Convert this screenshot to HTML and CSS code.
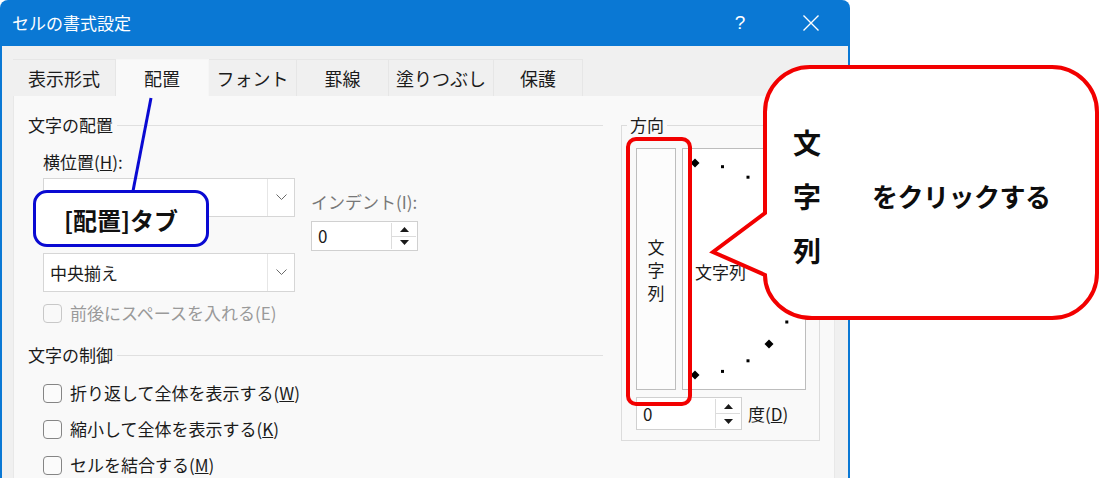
FILE: index.html
```html
<!DOCTYPE html>
<html lang="ja">
<head>
<meta charset="utf-8">
<title>セルの書式設定</title>
<link rel="stylesheet" href="styles.css">
</head>
<body>
<div class="stage">
  <div class="dialog">
    <div class="titlebar">
      <span class="title">セルの書式設定</span>
      <span class="tb-btn help">?</span>
      <span class="tb-btn close">
        <svg width="18" height="18" viewBox="0 0 18 18"><path d="M1.5 1.5 L16.5 16.5 M16.5 1.5 L1.5 16.5" stroke="#fff" stroke-width="1.4" fill="none"/></svg>
      </span>
    </div>
    <div class="dbody">
      <div class="tabs">
        <div class="tab t1">表示形式</div>
        <div class="tab t2 active">配置</div>
        <div class="tab t3">フォント</div>
        <div class="tab t4">罫線</div>
        <div class="tab t5">塗りつぶし</div>
        <div class="tab t6">保護</div>
      </div>
      <div class="panel">
        <div class="leftcol">
          <div class="sec-head">文字の配置</div>
          <div class="indent">
            <div class="align-grid">
              <div class="col1">
                <div class="lbl">横位置(<u>H</u>):</div>
                <div class="select">
                  <span class="val"></span>
                  <span class="arrow"><svg width="11" height="7" viewBox="0 0 11 7"><polyline points="0.5,0.5 5.5,5.5 10.5,0.5" fill="none" stroke="#6a6a6a" stroke-width="1"/></svg></span>
                </div>
                <div class="lbl lbl2"></div>
                <div class="select sel2">
                  <span class="val">中央揃え</span>
                  <span class="arrow"><svg width="11" height="7" viewBox="0 0 11 7"><polyline points="0.5,0.5 5.5,5.5 10.5,0.5" fill="none" stroke="#6a6a6a" stroke-width="1"/></svg></span>
                </div>
              </div>
              <div class="col2">
                <div class="lbl dim">インデント(I):</div>
                <div class="spin">
                  <span class="val">0</span>
                  <span class="btns">
                    <span class="sb"><svg width="9" height="5" viewBox="0 0 9 5"><polygon points="0,5 4.5,0 9,5" fill="#1a1a1a"/></svg></span>
                    <span class="sb sb-down"><svg width="9" height="5" viewBox="0 0 9 5"><polygon points="0,0 4.5,5 9,0" fill="#1a1a1a"/></svg></span>
                  </span>
                </div>
              </div>
            </div>
            <div class="cb disabled first"><span class="box"></span><span>前後にスペースを入れる(E)</span></div>
          </div>
          <div class="sec-head head2">文字の制御</div>
          <div class="indent">
            <div class="cb c1"><span class="box"></span><span>折り返して全体を表示する(<u>W</u>)</span></div>
            <div class="cb c2"><span class="box"></span><span>縮小して全体を表示する(<u>K</u>)</span></div>
            <div class="cb c2"><span class="box"></span><span>セルを結合する(<u>M</u>)</span></div>
          </div>
        </div>
        <fieldset class="dir">
          <legend>方向</legend>
          <div class="dir-row">
            <div class="vbtn">文<br>字<br>列</div>
            <div class="angle">
              <svg width="122" height="240" viewBox="0 0 122 240">
                <polygon points="12,9.5 16.5,14 12,18.5 7.5,14" fill="#000"/>
                <rect x="38" y="16.2" width="3" height="3" fill="#000"/>
                <rect x="63.5" y="26.7" width="3" height="3" fill="#000"/>
                <polygon points="87,40.5 91.5,45 87,49.5 82.5,45" fill="#000"/>
                <rect x="102.3" y="65.5" width="3" height="3" fill="#000"/>
                <rect x="112.9" y="91.1" width="3" height="3" fill="#000"/>
                <polygon points="118,115.5 122.5,120 118,124.5 113.5,120" fill="#000"/>
                <rect x="112.9" y="145.9" width="3" height="3" fill="#000"/>
                <rect x="102.3" y="171.5" width="3" height="3" fill="#000"/>
                <polygon points="86,190.5 90.5,195 86,199.5 81.5,195" fill="#000"/>
                <rect x="63.5" y="210.3" width="3" height="3" fill="#000"/>
                <rect x="38" y="220.9" width="3" height="3" fill="#000"/>
                <polygon points="12,221.5 16.5,226 12,230.5 7.5,226" fill="#000"/>
                <text x="12" y="130" class="angle-text">文字列</text>
              </svg>
            </div>
          </div>
          <div class="deg-row">
            <div class="spin deg">
              <span class="val">0</span>
              <span class="btns">
                <span class="sb"><svg width="9" height="5" viewBox="0 0 9 5"><polygon points="0,5 4.5,0 9,5" fill="#1a1a1a"/></svg></span>
                <span class="sb sb-down"><svg width="9" height="5" viewBox="0 0 9 5"><polygon points="0,0 4.5,5 9,0" fill="#1a1a1a"/></svg></span>
              </span>
            </div>
            <span class="lbl">度(<u>D</u>)</span>
          </div>
        </fieldset>
      </div>
    </div>
  </div>

  <svg class="blueline" width="220" height="200" viewBox="0 0 220 200"><line x1="151" y1="98" x2="133" y2="191" stroke="#0a0ad2" stroke-width="3"/></svg>
  <div class="bluebox">[配置]タブ</div>

  <div class="redbox"></div>

  <svg class="bubble" width="401" height="265" viewBox="0 0 401 265">
    <path d="M110 7 H352 A45 45 0 0 1 397 52 V213 A45 45 0 0 1 352 258 H112 A47 43 0 0 1 65 215 L13 192 L65 153 V52 A45 45 0 0 1 110 7 Z" fill="#fff" stroke="#f20000" stroke-width="4" stroke-linejoin="miter"/>
  </svg>
  <div class="bubble-text">
    <div class="bt-col">
      <span>文</span>
      <span>字</span>
      <span>列</span>
    </div>
    <div class="bt-rest">をクリックする</div>
  </div>
</div>
</body>
</html>
```

FILE: styles.css
```css
* { box-sizing: border-box; }
html, body { margin: 0; padding: 0; }
body {
  background: #ffffff;
  font-family: "Noto Sans CJK JP", "Noto Sans", sans-serif;
  color: #1b1b1b;
}
.stage {
  position: relative;
  width: 1101px;
  height: 478px;
  overflow: hidden;
}
.dialog {
  width: 850px;
  height: 540px;
  background: #0a78d4;
  border-radius: 8px 8px 0 0;
  overflow: hidden;
  padding: 0 2px;
  display: flex;
  flex-direction: column;
}
.titlebar {
  height: 46px;
  display: flex;
  align-items: center;
  color: #fff;
  padding-left: 10px;
}
.title { flex: 1; font-size: 17px; line-height: 24px; }
.tb-btn {
  width: 56px;
  height: 46px;
  display: flex;
  align-items: center;
  justify-content: center;
}
.help { font-size: 19px; margin-right: 15px; font-family: "Liberation Sans", sans-serif; }
.close { margin-right: 9px; }

.dbody {
  flex: 1;
  background: #f0f0f0;
  padding: 13px 13px 0 11px;
}
.tabs { display: flex; height: 37px; }
.tab {
  height: 37px;
  font-size: 18px;
  line-height: 36px;
  text-align: center;
  border-top: 1px solid #e6e6e6;
  border-right: 1px solid #e6e6e6;
  background: #f0f0f0;
}
.tab.active { background: #f9f9f9; border-color: #f6f6f6; }
.t1 { width: 103px; }
.t2 { width: 93px; }
.t3 { width: 88px; }
.t4 { width: 92px; }
.t5 { width: 105px; }
.t6 { width: 89px; }

.panel {
  height: 420px;
  background: #f9f9f9;
  border: 1px solid #e8e8e8;
  border-top: 0;
  display: grid;
  grid-template-columns: 575px 199px;
  column-gap: 18px;
  align-items: start;
  padding: 17px 0 0 14px;
}
.sec-head {
  display: flex;
  align-items: center;
  height: 24px;
  font-size: 17px;
  line-height: 24px;
}
.sec-head::after {
  content: "";
  flex: 1;
  border-top: 1px solid #e0e0e0;
  margin-left: 4px;
}
.head2 { margin-top: 18px; }
.indent { margin-left: 15px; }
.align-grid {
  margin-top: 13px;
  display: grid;
  grid-template-columns: 252px 107px;
  column-gap: 16px;
  align-items: start;
}
.col1 { display: flex; flex-direction: column; }
.lbl { height: 24px; line-height: 24px; font-size: 17px; white-space: nowrap; }
.lbl2 { margin-top: 6px; }
.dim { color: #777777; }
.select {
  margin-top: 4px;
  height: 39px;
  border: 1px solid #d6d6d6;
  background: #fff;
  display: flex;
}
.sel2 { margin-top: 6px; }
.select .val { flex: 1; padding-left: 6px; line-height: 37px; font-size: 17px; }
.select .arrow {
  width: 27px;
  border-left: 1px solid #e6e6e6;
  display: flex;
  align-items: center;
  justify-content: center;
}
.col2 { padding-top: 40px; }
.spin {
  margin-top: 7px;
  height: 30px;
  border: 1px solid #d0d0d0;
  background: #fff;
  display: flex;
}
.spin .val { flex: 1; padding-left: 6px; line-height: 28px; font-size: 17px; }
.spin .btns {
  width: 25px;
  margin: 1px 1px 1px 0;
  border-left: 1px solid #dcdcdc;
  display: flex;
  flex-direction: column;
}
.sb { flex: 1; display: flex; align-items: center; justify-content: center; }
.sb-down { border-top: 1px solid #dcdcdc; }

.cb {
  display: flex;
  align-items: center;
  gap: 8px;
  height: 24px;
  font-size: 17px;
  line-height: 24px;
  white-space: nowrap;
}
.cb .box {
  width: 19px;
  height: 19px;
  border: 1px solid #858585;
  border-radius: 4px;
  background: #fbfbfb;
}
.cb.first { margin-top: 9px; }
.cb.disabled { color: #9a9a9a; }
.cb.disabled .box { border-color: #c8c8c8; background: #f9f9f9; }
.c1 { margin-top: 14px; }
.c2 { margin-top: 12px; }

.dir {
  margin: 0;
  min-width: 0;
  border: 1px solid #dcdcdc;
  padding: 11px 13px 10px 14px;
}
.dir legend {
  font-size: 17px;
  line-height: 24px;
  padding: 0 3px;
  margin-left: -9px;
}
.dir-row { display: flex; gap: 6px; height: 242px; }
.vbtn {
  width: 40px;
  border: 1px solid #bdbdbd;
  background: #fcfcfc;
  display: flex;
  align-items: center;
  justify-content: center;
  text-align: center;
  font-size: 17px;
  line-height: 23px;
}
.angle { width: 124px; border: 1px solid #bdbdbd; background: #fff; }
.angle svg { display: block; }
.angle-text { font-family: "Noto Sans CJK JP", sans-serif; font-size: 17px; fill: #1b1b1b; }
.deg-row { margin-top: 7px; display: flex; align-items: center; gap: 6px; }
.spin.deg { margin-top: 0; width: 106px; height: 33px; }
.spin.deg .val { line-height: 31px; }

.blueline { position: absolute; left: 0; top: 0; }
.bluebox {
  position: absolute;
  left: 33px;
  top: 190px;
  width: 176px;
  height: 57px;
  border: 3px solid #0a0ad2;
  border-radius: 14px;
  background: #fff;
  display: flex;
  align-items: center;
  justify-content: center;
  font-size: 24px;
  font-weight: bold;
  color: #111;
  padding-top: 2px;
}
.redbox {
  position: absolute;
  left: 626px;
  top: 137px;
  width: 66px;
  height: 269px;
  border: 4px solid #f20000;
  border-radius: 10px;
}
.bubble { position: absolute; left: 700px; top: 60px; }
.bubble-text {
  position: absolute;
  left: 793px;
  top: 115px;
  display: flex;
  align-items: center;
  font-weight: bold;
  color: #0d0d0d;
}
.bt-col { display: flex; flex-direction: column; width: 79px; font-size: 28px; }
.bt-col span { height: 54px; line-height: 54px; }
.bt-rest { font-size: 26px; line-height: 54px; letter-spacing: -0.5px; }
```
